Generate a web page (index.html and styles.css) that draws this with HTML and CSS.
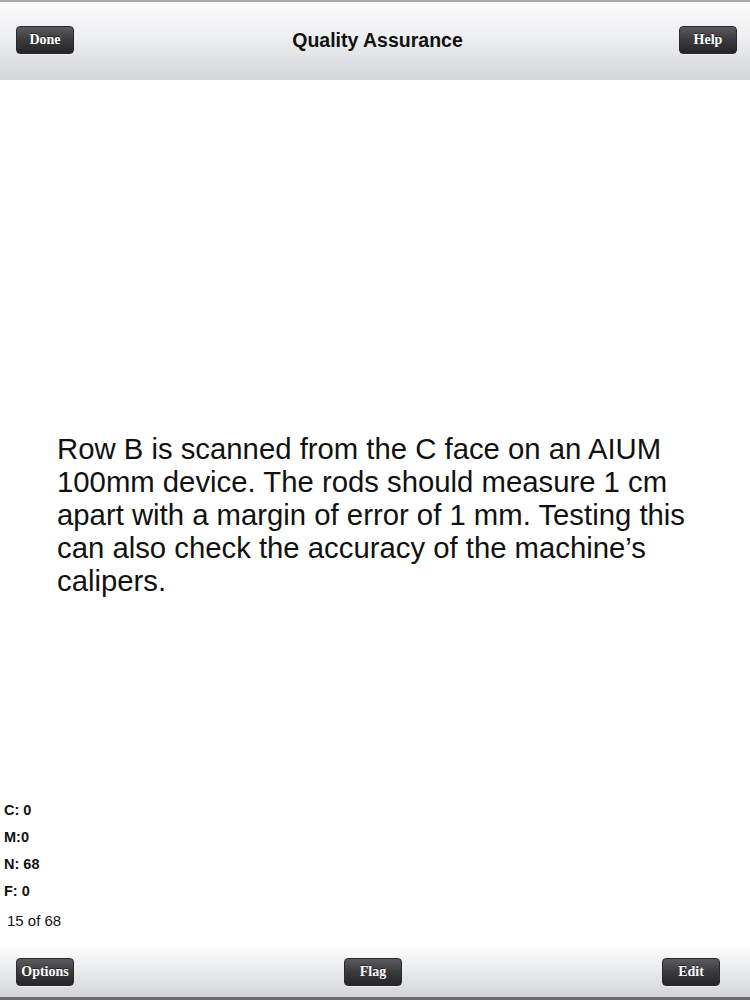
FILE: index.html
```html
<!DOCTYPE html>
<html>
<head>
<meta charset="utf-8">
<link rel="stylesheet" href="styles.css">
</head>
<body>
<div class="screen">
  <header class="topbar">
    <button class="btn">Done</button>
    <div class="title">Quality Assurance</div>
    <button class="btn">Help</button>
  </header>
  <div class="body">
    <main class="content">
      <p class="question">Row B is scanned from the C face on an AIUM 100mm device. The rods should measure 1 cm apart with a margin of error of 1 mm. Testing this can also check the accuracy of the machine’s calipers.</p>
    </main>
    <section class="stats">
      <div class="stat">C: 0</div>
      <div class="stat">M:0</div>
      <div class="stat">N: 68</div>
      <div class="stat">F: 0</div>
      <div class="count">15 of 68</div>
    </section>
  </div>
  <footer class="bottombar">
    <button class="btn">Options</button>
    <button class="btn flag">Flag</button>
    <button class="btn">Edit</button>
  </footer>
</div>
</body>
</html>
```
FILE: styles.css
```css
html, body {
  margin: 0;
  padding: 0;
  background: #ffffff;
}
.screen {
  width: 750px;
  height: 1000px;
  display: flex;
  flex-direction: column;
  font-family: "Liberation Sans", Arial, sans-serif;
  color: #111;
}
.topbar {
  height: 76px;
  border-top: 2px solid #a9a9ab;
  background: linear-gradient(to bottom, #fbfbfc 0%, #eeeff0 45%, #d2d4d6 100%);
  display: flex;
  align-items: center;
  justify-content: space-between;
  padding: 0 13px 2px 16px;
  flex-shrink: 0;
}
.title {
  font-weight: bold;
  font-size: 19.5px;
  color: #111;
  margin-left: 2px;
}
.btn {
  box-sizing: border-box;
  height: 28px;
  width: 58px;
  padding: 0;
  border: 1px solid #2a2a2a;
  border-radius: 4px;
  background: linear-gradient(to bottom, #5c5c5e 0%, #3a3a3c 50%, #262628 100%);
  color: #fff;
  font-family: "Liberation Serif", "Times New Roman", serif;
  font-weight: bold;
  font-size: 14px;
  text-shadow: 0 -1px 0 rgba(0,0,0,0.5);
  box-shadow: 0 1px 0 rgba(255,255,255,0.4);
  cursor: pointer;
}
.body {
  flex: 1;
  display: grid;
  grid-template-areas: "main";
}
.content {
  grid-area: main;
  display: flex;
  align-items: center;
  padding: 0 53px 0 57px;
}
.question {
  margin: 6px 0 0 0;
  font-size: 29.3px;
  line-height: 33px;
  color: #111;
}
.stats {
  grid-area: main;
  align-self: end;
  padding: 0 0 6px 4px;
  display: flex;
  flex-direction: column;
}
.stat {
  font-weight: bold;
  font-size: 14.5px;
  line-height: 27px;
  color: #111;
}
.count {
  font-size: 15px;
  line-height: 32px;
  margin-left: 3px;
  color: #111;
}
.bottombar {
  height: 50px;
  border-bottom: 3px solid #6d6d6f;
  background: linear-gradient(to bottom, #ffffff 0%, #eeeff0 40%, #d3d5d7 100%);
  display: flex;
  align-items: center;
  justify-content: space-between;
  padding: 4px 30px 0 16px;
  flex-shrink: 0;
}
.flag {
  margin-left: 10px;
}
```
